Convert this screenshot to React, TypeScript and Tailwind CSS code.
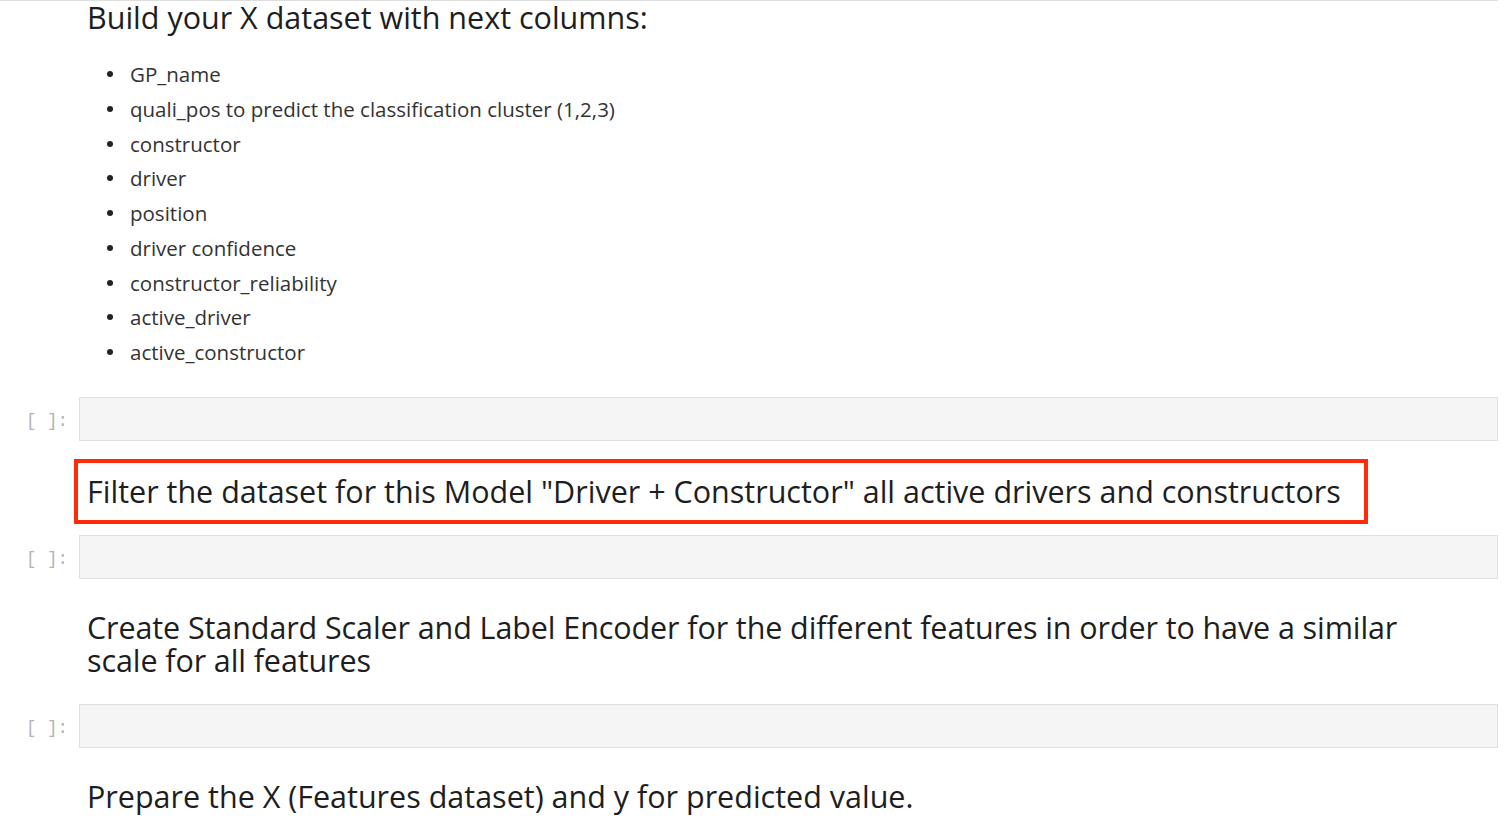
const columns = [
  "GP_name",
  "quali_pos to predict the classification cluster (1,2,3)",
  "constructor",
  "driver",
  "position",
  "driver confidence",
  "constructor_reliability",
  "active_driver",
  "active_constructor",
];

const sans = "font-['Open_Sans','Noto_Sans',sans-serif]";

function CodeCell() {
  return (
    <div className="flex items-center">
      <div className="w-[79px] shrink-0 pr-[11px] pt-[4px] text-right font-['Liberation_Mono',monospace] text-[17.5px] leading-none text-[#b4b4b4]">
        [&nbsp;]:
      </div>
      <div className="h-[44px] flex-1 border border-[#e0e0e0] bg-[#f5f5f5]" />
    </div>
  );
}

function Heading({ children, className = "" }: { children: React.ReactNode; className?: string }) {
  return (
    <h2 className={`pl-[87px] text-[30.5px] leading-[33px] text-[#1e1e1e] ${className}`}>{children}</h2>
  );
}

export default function App() {
  return (
    <div className={`min-h-screen bg-white pr-[12px] ${sans}`}>
      <div className="h-[1px] bg-[#dedede]" />

      <Heading>Build your X dataset with next columns:</Heading>

      <ul className="mt-[23px] pl-[107px] text-[20.5px] leading-[34.75px] text-[#333]">
        {columns.map((c) => (
          <li key={c} className="flex items-start">
            <span className="mt-[14px] h-[6px] w-[6px] shrink-0 rounded-full bg-[#222]" />
            <span className="ml-[17px]">{c}</span>
          </li>
        ))}
      </ul>

      <div className="mt-[27.5px]">
        <CodeCell />
      </div>

      <div className="ml-[74px] mt-[18px] w-[1294px] border-4 border-[#fe2a0a] py-[12px] pl-[9px] text-[30.5px] leading-[33px] text-[#1e1e1e]">
        Filter the dataset for this Model "Driver + Constructor" all active drivers and constructors
      </div>

      <div className="mt-[11px]">
        <CodeCell />
      </div>

      <Heading className="mt-[32px] tracking-[-0.1px]">
        Create Standard Scaler and Label Encoder for the different features in order to have a similar
        <br />
        scale for all features
      </Heading>

      <div className="mt-[27px]">
        <CodeCell />
      </div>

      <Heading className="mt-[32px]">Prepare the X (Features dataset) and y for predicted value.</Heading>
    </div>
  );
}
